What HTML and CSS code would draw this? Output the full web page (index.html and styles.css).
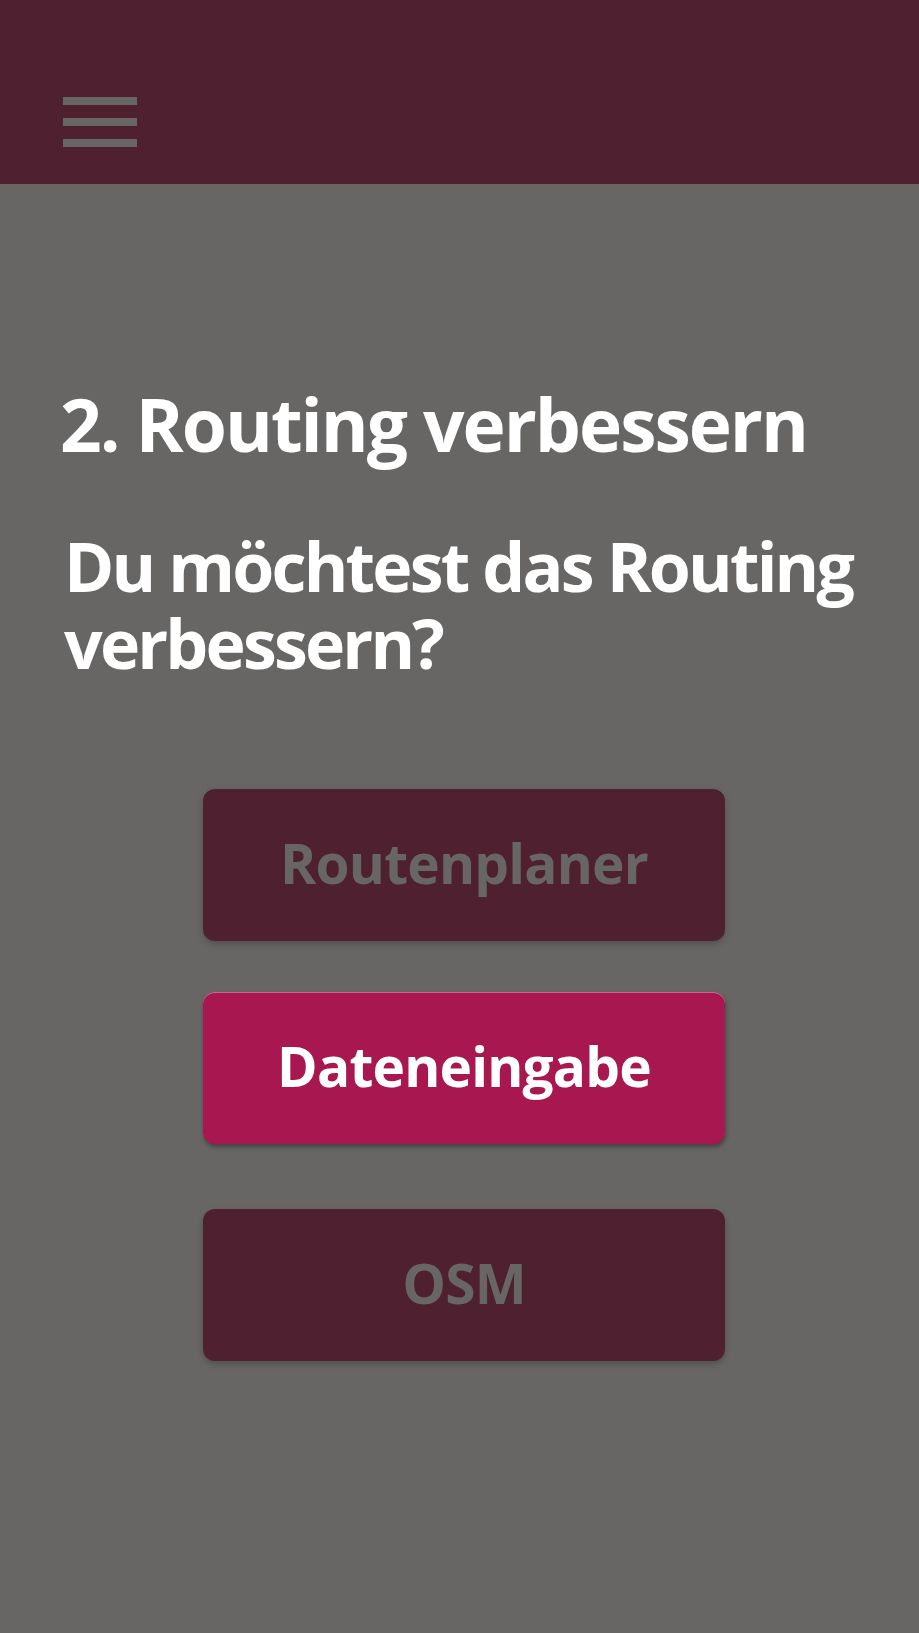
FILE: index.html
```html
<!DOCTYPE html>
<html lang="de">
<head>
<meta charset="utf-8">
<title>Routing verbessern</title>
<link rel="stylesheet" href="styles.css">
</head>
<body>
<header class="topbar">
  <button class="menu" aria-label="Menü">
    <span class="bar"></span><span class="bar"></span><span class="bar"></span>
  </button>
</header>
<main class="content">
  <h1 class="title">2. Routing verbessern</h1>
  <h2 class="question">Du möchtest das Routing verbessern?</h2>
  <div class="actions">
    <button class="btn btn-dim btn-first">Routenplaner</button>
    <button class="btn btn-active">Dateneingabe</button>
    <button class="btn btn-dim btn-last">OSM</button>
  </div>
</main>
</body>
</html>
```

FILE: styles.css
```css
html, body {
  margin: 0;
  padding: 0;
}
body {
  width: 919px;
  min-height: 1633px;
  background: #676665;
  font-family: "Open Sans", "Noto Sans", sans-serif;
  color: #ffffff;
}
.topbar {
  height: 184px;
  background: #4f2030;
  box-sizing: border-box;
  padding: 97px 0 0 63px;
}
.menu {
  display: flex;
  flex-direction: column;
  gap: 13px;
  padding: 0;
  margin: 0;
  border: 0;
  background: none;
  width: 74px;
}
.bar {
  display: block;
  width: 74px;
  height: 8px;
  background: #676665;
}
.content {
  padding: 0 30px 0 60px;
}
.title {
  margin: 198px 0 0 0;
  font-size: 73px;
  line-height: 84px;
  font-weight: 700;
  letter-spacing: -2px;
}
.question {
  margin: 61px 0 0 4px;
  font-size: 68px;
  line-height: 77px;
  font-weight: 700;
  letter-spacing: -2.8px;
}
.actions {
  display: flex;
  flex-direction: column;
  padding-left: 143px;
  margin-top: 108px;
}
.btn {
  width: 522px;
  height: 152px;
  border: 0;
  border-radius: 12px;
  font-family: "Open Sans", "Noto Sans", sans-serif;
  font-size: 55px;
  font-weight: 700;
  letter-spacing: -0.8px;
  padding: 0 0 6px 0;
  box-shadow: 0 3px 6px rgba(0, 0, 0, 0.22);
}
.btn-dim {
  background: #4f2030;
  color: #676665;
}
.btn-active {
  background: #a8174f;
  color: #ffffff;
  margin-top: 51px;
  box-shadow: inset 0 1px 0 rgba(255, 255, 255, 0.35), 1px 3px 4px rgba(0, 0, 0, 0.35);
}
.btn-last {
  margin-top: 65px;
}
```
